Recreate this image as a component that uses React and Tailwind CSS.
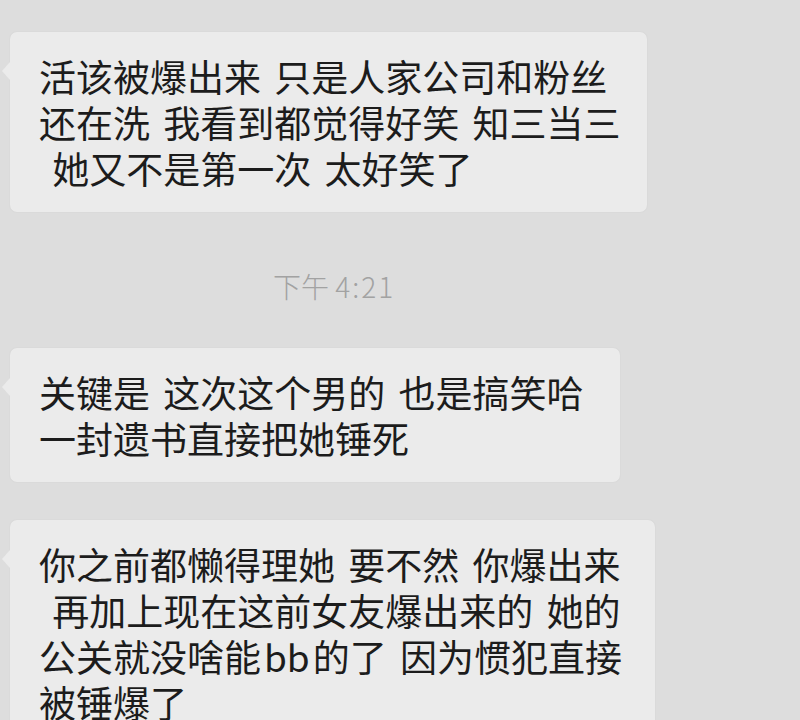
import React from "react";

const font = {
  fontFamily: '"Noto Sans CJK SC", "Noto Sans", sans-serif',
};

function Bubble({ width, lines, className = "" }) {
  return (
    <div
      className={`relative ml-[10px] rounded-[7px] bg-[#ebebeb] px-[29px] py-[21px] text-[37px] leading-[46px] text-[#1c1c1c] [word-spacing:5px] shadow-[0_0_2px_rgba(0,0,0,0.06)] ${className}`}
      style={{ width }}
    >
      {/* tail */}
      <div className="absolute left-[-8px] top-[30px] h-0 w-0 border-y-[9px] border-r-[8px] border-y-transparent border-r-[#ebebeb]" />
      {lines.map((line, i) => (
        <div key={i} className="whitespace-pre">
          {line}
        </div>
      ))}
    </div>
  );
}

export default function App() {
  return (
    <div
      className="h-[720px] w-[800px] overflow-hidden bg-[#dddddd] pt-[32px]"
      style={font}
    >
      <Bubble
        width={637}
        lines={[
          "活该被爆出来 只是人家公司和粉丝",
          "还在洗 我看到都觉得好笑 知三当三",
          " 她又不是第一次 太好笑了",
        ]}
      />

      <div className="ml-[273px] mt-[56px] text-[28px] leading-[36px] font-light text-[#a2a2a2]">
        下午 <span className="tracking-[2px]">4:21</span>
      </div>

      <Bubble
        width={610}
        className="mt-[44px]"
        lines={["关键是 这次这个男的 也是搞笑哈", "一封遗书直接把她锤死"]}
      />

      <Bubble
        width={645}
        className="mt-[38px]"
        lines={[
          "你之前都懒得理她 要不然 你爆出来",
          " 再加上现在这前女友爆出来的 她的",
          <>
            公关就没啥能<span className="mx-[3px]">bb</span>的了 因为惯犯直接
          </>,
          "被锤爆了",
        ]}
      />
    </div>
  );
}
